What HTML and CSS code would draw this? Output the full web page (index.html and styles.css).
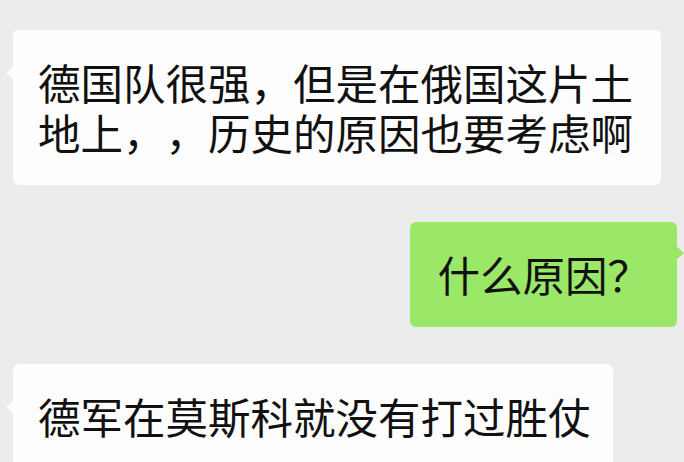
FILE: index.html
```html
<!DOCTYPE html>
<html lang="zh-CN">
<head>
  <meta charset="UTF-8" />
  <meta name="viewport" content="width=device-width, initial-scale=1.0" />
  <title>聊天</title>
  <link rel="stylesheet" href="styles.css">
</head>
<body>
  <!-- 聊天记录 -->
  <div class="chat">
    <div class="msg left wide">
      <p>德国队很强，但是在俄国这片土地上，，历史的原因也要考虑啊</p>
    </div>
    <div class="msg right">
      <p>什么原因？</p>
    </div>
    <div class="msg left">
      <p>德军在莫斯科就没有打过胜仗</p>
    </div>
  </div>
</body>
</html>
```

FILE: styles.css
```css
* { box-sizing: border-box; margin: 0; padding: 0; }
body { background-color: #ececec; font-family: "Noto Sans CJK SC", "Noto Sans", sans-serif; color: #111; height: 100vh; overflow: hidden; }
.chat { display: flex; flex-direction: column; gap: 37px; padding: 30px 7px 0 13px; }
.msg { position: relative; border-radius: 6px; padding: 27px 22px 28px 25px; font-size: 42.5px; line-height: 50px; text-spacing-trim: space-all; }
.msg.wide { width: 648px; }
.left { align-self: flex-start; background-color: #fdfdfd; }
.right { align-self: flex-end; background-color: #9be767; padding-left: 27px; padding-right: 27px; }
.left::before { content: ""; position: absolute; left: -7px; top: 36px; border-width: 7px 8px 7px 0; border-style: solid; border-color: transparent #fdfdfd transparent transparent; }
.right::after { content: ""; position: absolute; right: -7px; top: 24px; border-width: 7px 0 7px 8px; border-style: solid; border-color: transparent transparent transparent #9be767; }
```
